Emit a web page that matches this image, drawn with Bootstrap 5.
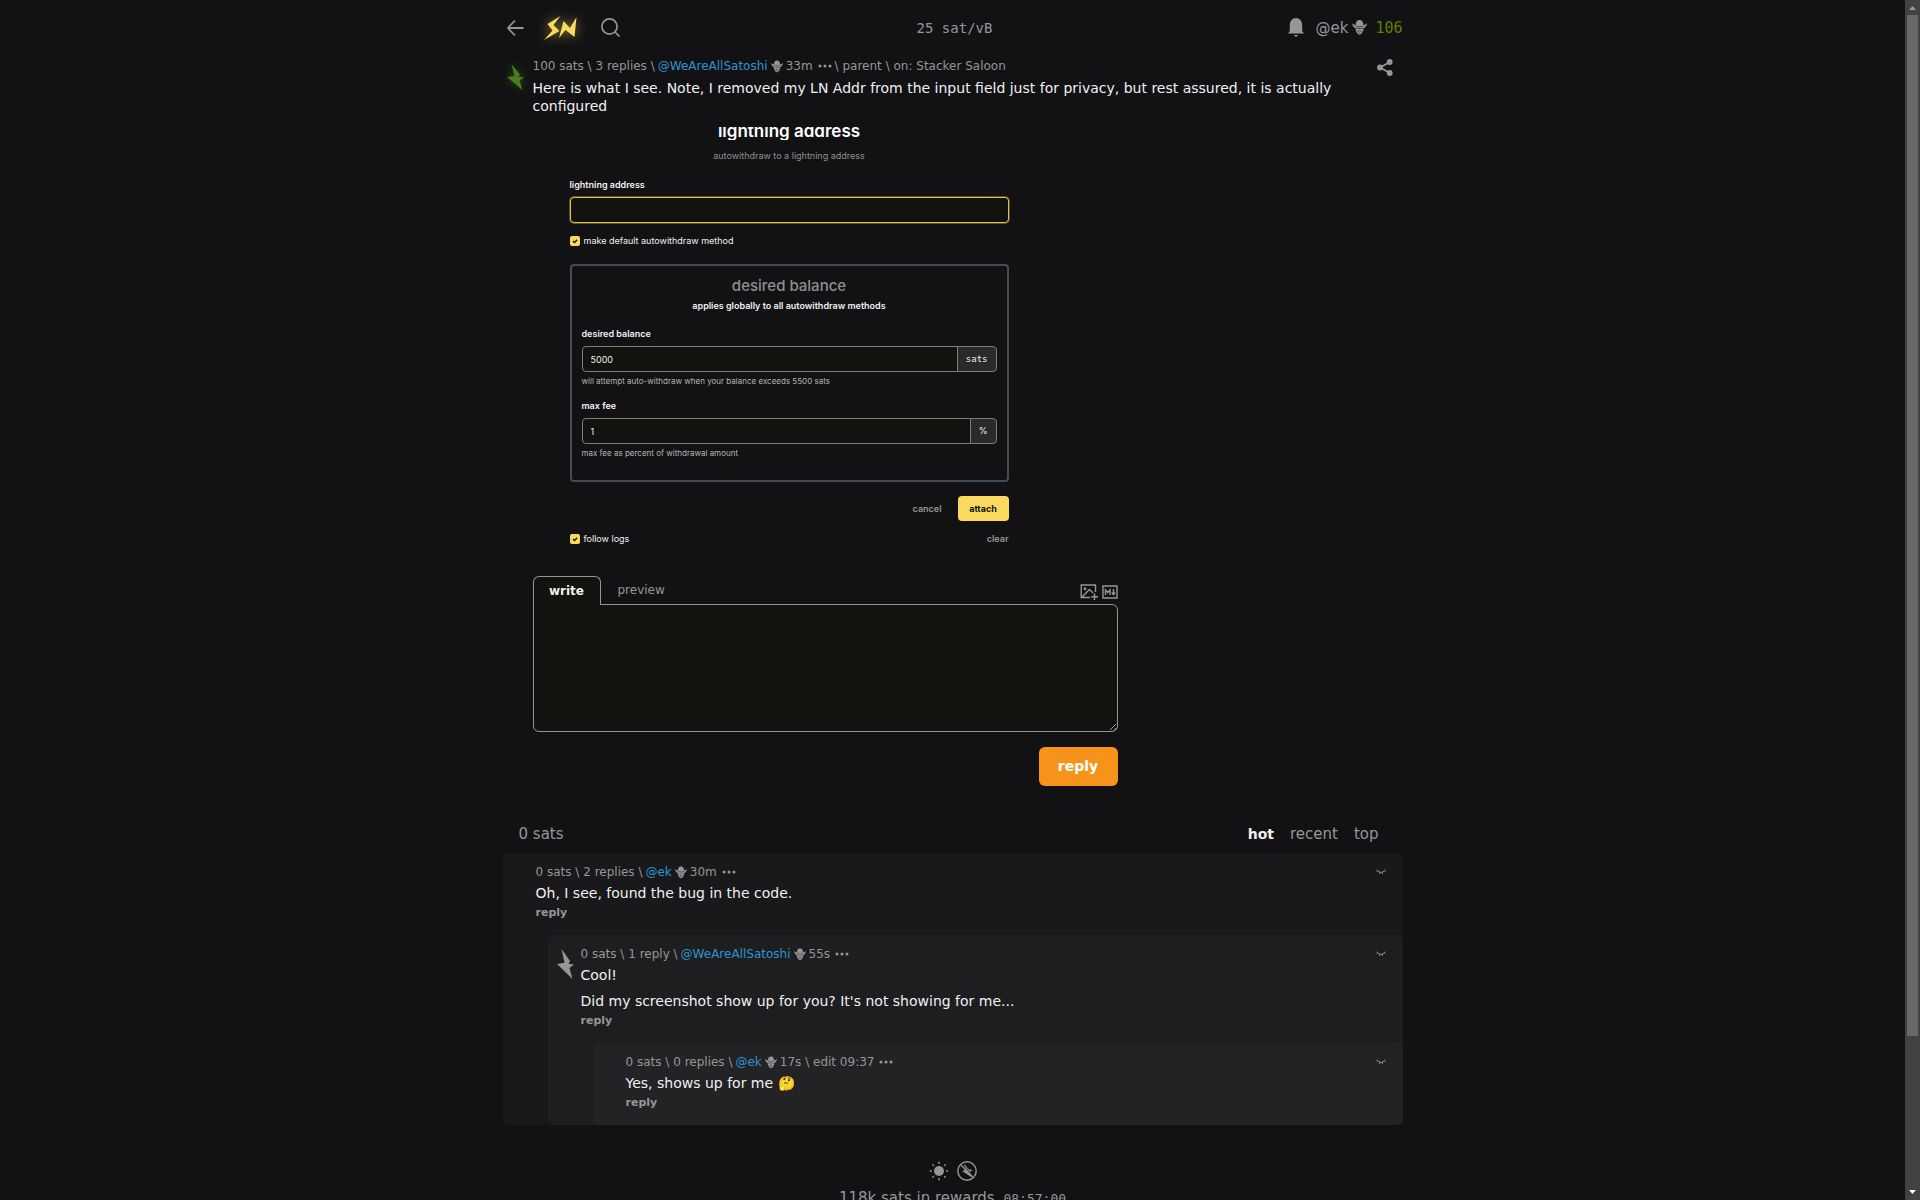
<!DOCTYPE html>
<html lang="en" data-bs-theme="dark">
<head>
<meta charset="utf-8">
<meta name="viewport" content="width=device-width, initial-scale=1">
<title>Comment on Stacker Saloon</title>
<link href="https://cdn.jsdelivr.net/npm/bootstrap@5.3.0/dist/css/bootstrap.min.css" rel="stylesheet">
<style>
body{background:#121214;color:#f0f0f0;font-family:"DejaVu Sans",sans-serif;font-size:14px;line-height:18px}
a{text-decoration:none;color:inherit}
svg{display:block;fill:currentColor}
svg.outline{fill:none;stroke:currentColor}
.shell{height:100vh}
.wrap{max-width:900px}
.muted{color:#969696}
.mono{font-family:"DejaVu Sans Mono",monospace;font-size:14px}
.topbar{height:55px;padding:0 0 0 4px}
.logo{color:#fada5e;margin-left:20px;filter:drop-shadow(0 0 6px rgba(250,218,94,.6))}
.user{font-size:15px}
.green{color:#5c8001;font-size:15px}
.bolt-cell{width:26px;flex:none}
.bolt-on{color:#4c7c1d;margin-top:7px;filter:drop-shadow(0 0 4px #2c4c12)}
.bolt-off{margin:4px 0 0 2px}
.meta{font-size:12px;color:#969696;line-height:18px;gap:3px}
.meta .nym{color:#2d94d0}
.meta .more{margin-left:2px}
.body-text{font-size:14px;color:#f0f0f0;margin:3px 0 0}
.item .body-text{margin-top:4px}
.body-text p{margin:0 0 8px}
.body-text p:last-child{margin:0}
.item{padding:2px 0 0 4px}
.share{padding:2px 10px 0 0}
/* autowithdraw form */
.shot{font-family:Inter,sans-serif;width:439px;margin:12px 0 0 37px;font-size:9px;line-height:12px;color:#f0f0f0}
.shot-title{height:13px;overflow:hidden;display:flex;align-items:flex-end;justify-content:center;margin:0;font-size:17px;line-height:18px;font-weight:600}
.shot .sub{color:#8f8f8f;margin:10px 0 0}
.shot label.strong{font-weight:600;display:block;font-size:9px;margin:17px 0 6px}
.shot .panel label.strong{margin:16px 0 6px}
.shot .panel .hint + label.strong{margin-top:13px}
.shot input[type=text]{background:#12120f;border:1px solid #7d7d7d;color:#eee;font-size:9px;line-height:12px;height:26px;padding:0 8px;min-height:0;border-radius:4px}
.shot input.hot-field{border-color:#e0c254;box-shadow:0 0 0 1px #5b5029;width:100%;display:block}
.shot .input-group input[type=text]{border-radius:4px 0 0 4px}
.tick{appearance:none;width:10px;height:10px;margin:0;border-radius:2px;flex:none;background:#fada5e url("data:image/svg+xml,%3Csvg xmlns='http://www.w3.org/2000/svg' viewBox='0 0 10 10'%3E%3Cpath d='M3 5l1.5 1.5L7.2 3.7' fill='none' stroke='%23121214' stroke-width='1.3'/%3E%3C/svg%3E")}
.default-row{margin-top:12px}
.panel{border:2px solid #464b52;border-radius:4px;margin-top:17px;padding:11px 10px 21px}
.panel h3{font-size:15px;line-height:18px;font-weight:500;color:#8f8f8f;margin:0 0 5px;text-align:center}
.shot .input-group-text{background:#2a2a2c;border:1px solid #7d7d7d;color:#eee;font-size:9px;line-height:12px;padding:0 8px;border-radius:4px}
.shot .unit{font-family:"DejaVu Sans Mono",monospace}
.hint{font-size:8px;color:#b5b5b5;margin:3px 0 0;line-height:12px}
.shot-actions{margin-top:14px}
.btn-attach{background:#fada5e;color:#121214;font-size:9px;line-height:12px;font-weight:700;border:0;border-radius:4px;width:51px;height:25px;padding:0}
.link-btn{background:none;border:0;padding:0;color:#969696;font:inherit;font-weight:600}
/* reply form */
.reply-form{width:585px;margin-top:31px}
.write-tab{height:29px;width:68px;margin-bottom:-1px;border:1px solid #969696;border-bottom:0;border-radius:6px 6px 0 0;background:#12120f;color:#f0f0f0;font-weight:700;font-size:12px;z-index:1;padding:0}
.preview-tab{background:none;border:0;color:#969696;font-size:12px;padding:0;margin-left:17px;height:28px}
.write-box{height:128px;background:#12120f;border:1px solid #969696;border-radius:0 6px 6px 6px;resize:vertical;display:block;color:#f0f0f0}
.write-box:focus,.shot input:focus{background:#12120f}
.btn-reply{background:#f7931a;color:#fff;font-weight:700;font-size:14px;width:79px;height:39px;padding:0;border:0;border-radius:6px;margin-top:15px}
.sorts{padding:0 24px 0 16px;margin-top:39px;height:28px;gap:16px;font-size:15px}
.sorts .on{font-weight:700;font-size:14px;color:#f0f0f0}
.comment{border-radius:6px}
.lv1{background:#19191b}
.lv2{background:#1e1e20;margin-left:45px}
.lv3{background:#232325;margin-left:45px}
.c-main{padding:10px 17px 14px 7px}
.rep{font-size:11px;font-weight:700;color:#969696;line-height:16px;margin-top:3px;display:block}
.foot{padding-top:36px;font-size:15px}
.foot .mono{font-size:13px}
.scroll-rail{width:15px;background:#424242;flex:none;color:#9a9a9a}
.scroll-thumb{background:#686868;width:11px;height:1021px;max-height:86%}
</style>
<script src="https://cdn.jsdelivr.net/npm/bootstrap@5.3.0/dist/js/bootstrap.bundle.min.js"></script>
</head>
<body>
<svg class="d-none" aria-hidden="true">
<symbol id="hat" viewBox="0 0 24 24"><path d="M7.500 2C9 .8 10 0 12 0s3 .8 4.500 2c1 1.500 1.600 4 1.900 6.200 2-.5 3.800-1.500 5.600-3-.6 3.800-2.500 6.300-5 8.100H5C2.500 11.500.6 9 0 5.200c1.800 1.500 3.600 2.500 5.600 3C5.900 6 6.500 3.500 7.500 2zM5.600 14h12.800c-.2 3.200-1.600 5.900-3.400 7.900L12 24l-3-2.100c-1.800-2-3.200-4.700-3.400-7.900z"/><path d="M8.500 18.500q3.500-2.800 7 0M10.500 21h3M5.800 10q6.200 2 12.400 0" fill="none" stroke="#19191b" stroke-width="1"/></symbol>
<symbol id="dots" viewBox="0 0 14 12"><circle cx="2" cy="6" r="1.500"/><circle cx="7" cy="6" r="1.500"/><circle cx="12" cy="6" r="1.500"/></symbol>
<symbol id="shut" viewBox="0 0 10 6"><path d="M.7.7q4.300 5.500 8.600 0M1.500 1.800.7 2.700M3.800 3.500l-.4 1.500M6.200 3.500l.4 1.500M8.500 1.800l.8.900" fill="none" stroke="currentColor" stroke-width="1"/></symbol>
</svg>
<div class="shell d-flex overflow-hidden">
<div class="flex-grow-1 overflow-hidden">
<div class="wrap mx-auto">
<header class="topbar d-flex align-items-center muted">
  <div class="d-flex align-items-center col">
    <a href="#" aria-label="back"><svg width="17" height="18" viewBox="0 0 17 18"><path d="M16.500 9H1.500M8 1.500.9 9 8 16.500" fill="none" stroke="currentColor" stroke-width="1.800"/></svg></a>
    <a href="#" class="logo" aria-label="home"><svg width="33" height="24" viewBox="0 0 33 24"><path d="M16.500 0 9.500 9 15.500 15 0 24 8.500 14.500 3.500 8z"/><path d="M19.500 5 26 12 32.500 1 30.500 21 21.500 14 15 22z"/></svg></a>
    <a href="#" class="ms-4" aria-label="search"><svg class="outline" width="19" height="19" viewBox="0 0 19 19" stroke-width="1.700"><circle cx="8.500" cy="8.500" r="7.600"/><path d="m14 14 4.500 4.500"/></svg></a>
  </div>
  <a href="#" class="mono">25 sat/vB</a>
  <div class="d-flex align-items-center justify-content-end col">
    <a href="#" aria-label="notifications"><svg width="16" height="19" viewBox="0 0 16 19"><path d="M0 15.500 1.800 13V7C1.800 3 4.500 0 8 0s6.200 3 6.200 7v6l1.800 2.500zM5.500 17h5L8 19z"/></svg></a>
    <a href="#" class="user d-flex align-items-center ms-2 ps-1">@ek<svg width="15" height="15" class="ms-1"><use href="#hat"/></svg></a>
    <a href="#" class="mono green ms-2">106</a>
  </div>
</header>

<main>
<article class="item d-flex">
  <div class="bolt-cell"><svg class="bolt-on" width="17" height="26" viewBox="0 0 17 26"><path d="M4.500 0 13 10.500 11.500 12.700 17 13.500 12.500 16.500 15.500 26 0 13 7.500 12z"/></svg></div>
  <div class="flex-grow-1">
    <div class="meta d-flex align-items-center"><span>100 sats \ 3 replies \</span><a class="nym" href="#">@WeAreAllSatoshi</a><svg width="12" height="13"><use href="#hat"/></svg><span>33m</span><svg class="more" width="14" height="12"><use href="#dots"/></svg><span>\ <a href="#">parent</a> \ on: <a href="#">Stacker Saloon</a></span></div>
    <div class="body-text">Here is what I see. Note, I removed my LN Addr from the input field just for privacy, but rest assured, it is actually configured</div>

    <section class="shot">
      <h2 class="shot-title">lightning address</h2>
      <p class="sub text-center">autowithdraw to a lightning address</p>
      <label class="strong" for="addr">lightning address</label>
      <input id="addr" type="text" class="hot-field">
      <div class="default-row d-flex align-items-center gap-1"><input class="tick" type="checkbox" id="def" checked><label for="def">make default autowithdraw method</label></div>
      <div class="panel">
        <h3>desired balance</h3>
        <p class="text-center fw-semibold m-0">applies globally to all autowithdraw methods</p>
        <label class="strong" for="bal">desired balance</label>
        <div class="input-group flex-nowrap"><input id="bal" type="text" class="form-control" value="5000"><span class="input-group-text unit">sats</span></div>
        <p class="hint">will attempt auto-withdraw when your balance exceeds 5500 sats</p>
        <label class="strong" for="fee">max fee</label>
        <div class="input-group flex-nowrap"><input id="fee" type="text" class="form-control" value="1"><span class="input-group-text">%</span></div>
        <p class="hint">max fee as percent of withdrawal amount</p>
      </div>
      <div class="shot-actions d-flex justify-content-end align-items-center gap-3"><button type="button" class="link-btn">cancel</button><button type="button" class="btn btn-attach">attach</button></div>
      <div class="d-flex justify-content-between mt-2 pt-1"><span class="d-flex align-items-center gap-1"><input class="tick" type="checkbox" id="logs" checked><label for="logs">follow logs</label></span><button type="button" class="link-btn">clear</button></div>
    </section>

    <form class="reply-form">
      <div class="d-flex">
        <button type="button" class="write-tab position-relative">write</button>
        <button type="button" class="preview-tab">preview</button>
        <div class="d-flex ms-auto align-items-center muted gap-1 pt-1">
          <svg class="outline" width="18" height="16" viewBox="0 0 18 16" stroke-width="1.400"><path d="M10 13.500H1.200V1h14.300v7M2 13l7.500-7.500L13 9M14.500 9.500V16M11.200 12.700H18"/><circle cx="5" cy="4.800" r=".8"/></svg>
          <svg class="outline" width="16" height="14" viewBox="0 0 16 14" stroke-width="1.400"><path d="M1 1h14v12H1zM3.500 10V5l2.200 2.400L8 5v5M11.500 4v5.500M9.800 7.600l1.700 2 1.700-2"/></svg>
        </div>
      </div>
      <textarea class="form-control write-box" aria-label="reply text"></textarea>
      <div class="text-end"><button type="button" class="btn btn-reply">reply</button></div>
    </form>
  </div>
  <a href="#" class="share muted" aria-label="share"><svg width="16" height="17" viewBox="0 0 16 17"><path d="M13 3 3 8.500l10 5.500" fill="none" stroke="currentColor" stroke-width="1.800"/><circle cx="12.700" cy="3" r="2.900"/><circle cx="3" cy="8.500" r="2.900"/><circle cx="12.700" cy="14" r="2.900"/></svg></a>
</article>

<nav class="sorts d-flex muted"><span class="me-auto">0 sats</span><a href="#" class="on">hot</a><a href="#">recent</a><a href="#">top</a></nav>

<div class="comment lv1">
  <div class="c-main d-flex"><div class="bolt-cell"></div><div class="flex-grow-1">
    <div class="meta d-flex align-items-center"><span>0 sats \ 2 replies \</span><a class="nym" href="#">@ek</a><svg width="12" height="13"><use href="#hat"/></svg><span>30m</span><svg class="more" width="14" height="12"><use href="#dots"/></svg><svg class="ms-auto" width="10" height="6"><use href="#shut"/></svg></div>
    <div class="body-text">Oh, I see, found the bug in the code.</div>
    <a href="#" class="rep">reply</a>
  </div></div>
  <div class="comment lv2">
    <div class="c-main d-flex"><div class="bolt-cell muted"><svg class="bolt-off" width="17" height="30" viewBox="0 0 17 26" preserveAspectRatio="none"><path d="M4.500 0 13 10.500 11.500 12.700 17 13.500 12.500 16.500 15.500 26 0 13 7.500 12z"/></svg></div><div class="flex-grow-1">
      <div class="meta d-flex align-items-center"><span>0 sats \ 1 reply \</span><a class="nym" href="#">@WeAreAllSatoshi</a><svg width="12" height="13"><use href="#hat"/></svg><span>55s</span><svg class="more" width="14" height="12"><use href="#dots"/></svg><svg class="ms-auto" width="10" height="6"><use href="#shut"/></svg></div>
      <div class="body-text"><p>Cool!</p><p>Did my screenshot show up for you? It's not showing for me...</p></div>
      <a href="#" class="rep">reply</a>
    </div></div>
    <div class="comment lv3">
      <div class="c-main d-flex"><div class="bolt-cell"></div><div class="flex-grow-1">
        <div class="meta d-flex align-items-center"><span>0 sats \ 0 replies \</span><a class="nym" href="#">@ek</a><svg width="12" height="13"><use href="#hat"/></svg><span>17s \ <a href="#">edit 09:37</a></span><svg class="more" width="14" height="12"><use href="#dots"/></svg><svg class="ms-auto" width="10" height="6"><use href="#shut"/></svg></div>
        <div class="body-text">Yes, shows up for me 🤔</div>
        <a href="#" class="rep">reply</a>
      </div></div>
    </div>
  </div>
</div>
</main>

<footer class="foot muted text-center">
  <div class="d-flex justify-content-center align-items-center gap-2">
    <svg width="20" height="20" viewBox="0 0 20 20"><circle cx="10" cy="10" r="5"/><path d="M10 .8v2M10 17.200v2M.8 10h2M17.200 10h2M3.500 3.500l1.300 1.300M15.200 15.200l1.300 1.300M16.500 3.500l-1.300 1.300M4.800 15.200l-1.300 1.300" stroke="currentColor" stroke-width="1.600"/></svg>
    <svg width="20" height="20" viewBox="0 0 20 20"><circle cx="10" cy="10" r="9.200" fill="none" stroke="currentColor" stroke-width="1.400"/><path d="M7 3l5 5.500 3.500.5-2.500 2 2 5.500L5 10l2.500-.5z"/><path d="M3.700 3.700 16.500 16.500" stroke="currentColor" stroke-width="1.400"/><path d="M5 3.300 17 15.500" stroke="#121214" stroke-width="1"/></svg>
  </div>
  <div class="mt-2"><a href="#">118k sats in rewards</a> <span class="mono ms-1">08:57:00</span></div>
</footer>
</div>
</div>
<div class="scroll-rail d-flex flex-column align-items-center" aria-hidden="true">
  <svg width="15" height="15" viewBox="0 0 15 15"><path d="M4 10h7L7.500 6z"/></svg>
  <div class="scroll-thumb"></div>
  <svg class="mt-auto" width="15" height="15" viewBox="0 0 15 15"><path fill="#fff" d="M4 5h7L7.500 9z"/></svg>
</div>
</div>
</body>
</html>
